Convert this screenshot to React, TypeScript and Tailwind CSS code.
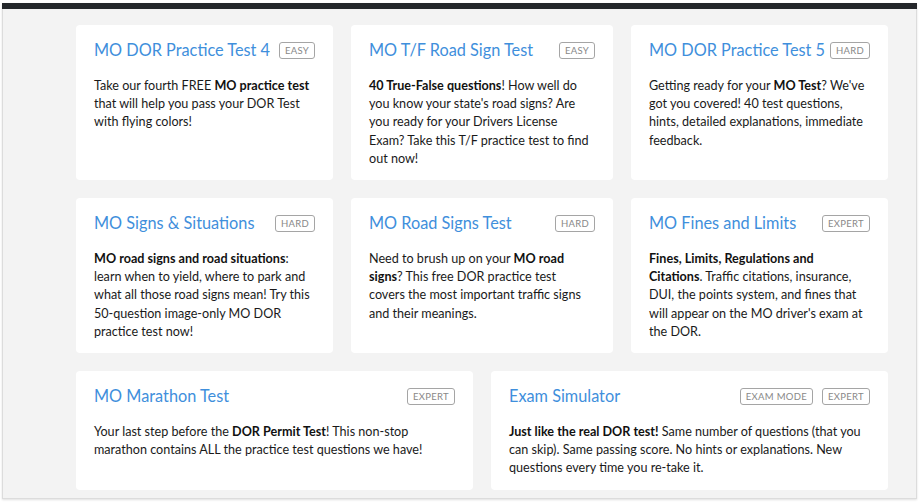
import React from "react";

type Card = {
  title: string;
  badges: string[];
  lines: React.ReactNode[];
};

const B = ({ children }: { children: React.ReactNode }) => (
  <strong className="font-bold text-[#111]">{children}</strong>
);

const row1: Card[] = [
  {
    title: "MO DOR Practice Test 4",
    badges: ["EASY"],
    lines: [
      <>Take our fourth FREE <B>MO practice test</B></>,
      <>that will help you pass your DOR Test</>,
      <>with flying colors!</>,
    ],
  },
  {
    title: "MO T/F Road Sign Test",
    badges: ["EASY"],
    lines: [
      <><B>40 True-False questions</B>! How well do</>,
      <>you know your state's road signs? Are</>,
      <>you ready for your Drivers License</>,
      <>Exam? Take this T/F practice test to find</>,
      <>out now!</>,
    ],
  },
  {
    title: "MO DOR Practice Test 5",
    badges: ["HARD"],
    lines: [
      <>Getting ready for your <B>MO Test</B>? We've</>,
      <>got you covered! 40 test questions,</>,
      <>hints, detailed explanations, immediate</>,
      <>feedback.</>,
    ],
  },
];

const row2: Card[] = [
  {
    title: "MO Signs & Situations",
    badges: ["HARD"],
    lines: [
      <><B>MO road signs and road situations</B>:</>,
      <>learn when to yield, where to park and</>,
      <>what all those road signs mean! Try this</>,
      <>50-question image-only MO DOR</>,
      <>practice test now!</>,
    ],
  },
  {
    title: "MO Road Signs Test",
    badges: ["HARD"],
    lines: [
      <>Need to brush up on your <B>MO road</B></>,
      <><B>signs</B>? This free DOR practice test</>,
      <>covers the most important traffic signs</>,
      <>and their meanings.</>,
    ],
  },
  {
    title: "MO Fines and Limits",
    badges: ["EXPERT"],
    lines: [
      <><B>Fines, Limits, Regulations and</B></>,
      <><B>Citations</B>. Traffic citations, insurance,</>,
      <>DUI, the points system, and fines that</>,
      <>will appear on the MO driver's exam at</>,
      <>the DOR.</>,
    ],
  },
];

const row3: Card[] = [
  {
    title: "MO Marathon Test",
    badges: ["EXPERT"],
    lines: [
      <>Your last step before the <B>DOR Permit Test</B>! This non-stop</>,
      <>marathon contains ALL the practice test questions we have!</>,
    ],
  },
  {
    title: "Exam Simulator",
    badges: ["EXAM MODE", "EXPERT"],
    lines: [
      <><B>Just like the real DOR test!</B> Same number of questions (that you</>,
      <>can skip). Same passing score. No hints or explanations. New</>,
      <>questions every time you re-take it.</>,
    ],
  },
];

function CardView({ c }: { c: Card }) {
  return (
    <div className="bg-white rounded-[4px] pt-[13px] pb-[12px] pl-[18px] pr-[18px] flex flex-col">
      <div className="flex items-center justify-between h-[24px]">
        <div className="text-[16.3px] leading-[24px] text-[#3f8fdc] whitespace-nowrap">{c.title}</div>
        <div className="flex gap-[9px]">
          {c.badges.map((b) => (
            <span
              key={b}
              className="h-[17px] px-[5px] border border-[#a5a5a5] rounded-[3px] text-[9.5px] leading-[15px] text-[#888] tracking-[0.3px]"
            >
              {b}
            </span>
          ))}
        </div>
      </div>
      <div className="mt-[15px] flex flex-col text-[12.6px] leading-[18.2px] text-[#1a1a1a]">
        {c.lines.map((l, i) => (
          <div key={i} className="whitespace-nowrap">
            {l}
          </div>
        ))}
      </div>
    </div>
  );
}

export default function App() {
  return (
    <div className="w-[920px] h-[503px] bg-white" style={{ fontFamily: "Lato, 'Open Sans', sans-serif" }}>
      <div className="ml-[2px] mt-[3px] w-[915px] h-[496px] bg-[#f3f3f3] border-l border-r border-b border-[#dcdcdc] shadow-[0_1px_2px_rgba(0,0,0,0.12)] flex flex-col">
        <div className="h-[6px] bg-[#24272b] -mx-px"></div>
        <div className="pt-[16px] pl-[73px] flex flex-col gap-[18px]">
          <div className="grid grid-cols-[257px_262px_257px] gap-[18px]">
            {row1.map((c) => (
              <CardView key={c.title} c={c} />
            ))}
          </div>
          <div className="grid grid-cols-[257px_262px_257px] gap-[18px]">
            {row2.map((c) => (
              <CardView key={c.title} c={c} />
            ))}
          </div>
          <div className="grid grid-cols-[397px_397px] gap-[18px]">
            {row3.map((c) => (
              <CardView key={c.title} c={c} />
            ))}
          </div>
        </div>
      </div>
    </div>
  );
}
